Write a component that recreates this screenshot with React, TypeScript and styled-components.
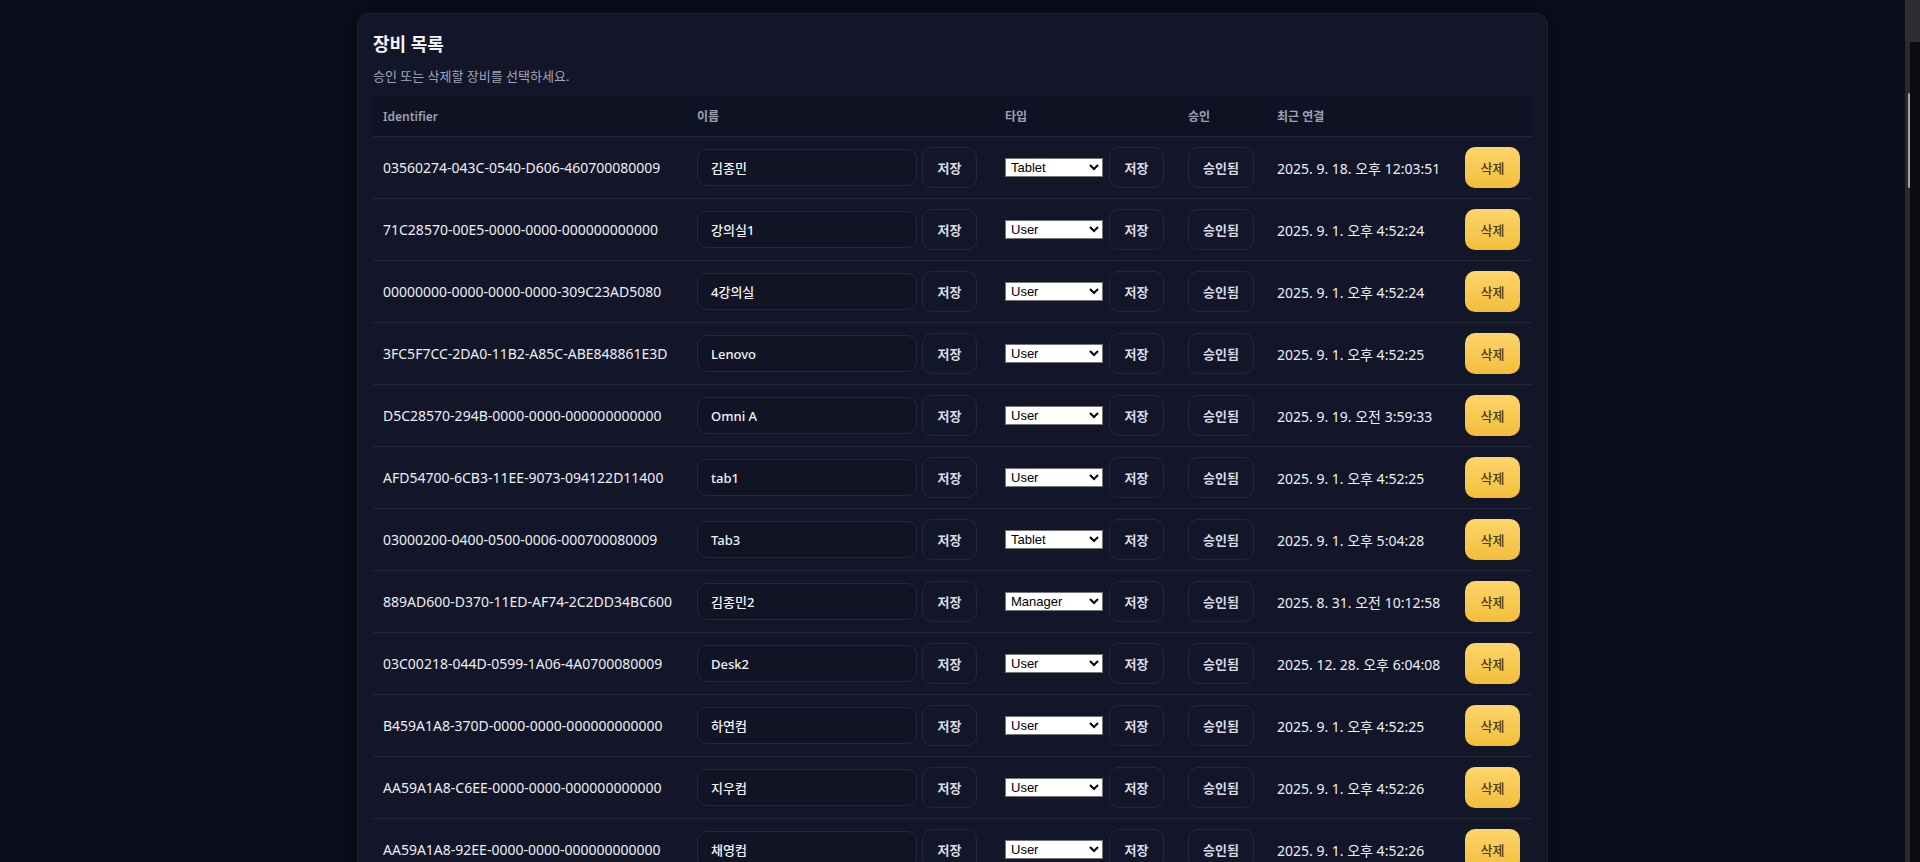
import styled, { createGlobalStyle } from "styled-components";

type DeviceType = {
  id: string;
  name: string;
  type: string;
  lastSeen: string;
};

const devices: DeviceType[] = [
  { id: "03560274-043C-0540-D606-460700080009", name: "김종민", type: "Tablet", lastSeen: "2025. 9. 18. 오후 12:03:51" },
  { id: "71C28570-00E5-0000-0000-000000000000", name: "강의실1", type: "User", lastSeen: "2025. 9. 1. 오후 4:52:24" },
  { id: "00000000-0000-0000-0000-309C23AD5080", name: "4강의실", type: "User", lastSeen: "2025. 9. 1. 오후 4:52:24" },
  { id: "3FC5F7CC-2DA0-11B2-A85C-ABE848861E3D", name: "Lenovo", type: "User", lastSeen: "2025. 9. 1. 오후 4:52:25" },
  { id: "D5C28570-294B-0000-0000-000000000000", name: "Omni A", type: "User", lastSeen: "2025. 9. 19. 오전 3:59:33" },
  { id: "AFD54700-6CB3-11EE-9073-094122D11400", name: "tab1", type: "User", lastSeen: "2025. 9. 1. 오후 4:52:25" },
  { id: "03000200-0400-0500-0006-000700080009", name: "Tab3", type: "Tablet", lastSeen: "2025. 9. 1. 오후 5:04:28" },
  { id: "889AD600-D370-11ED-AF74-2C2DD34BC600", name: "김종민2", type: "Manager", lastSeen: "2025. 8. 31. 오전 10:12:58" },
  { id: "03C00218-044D-0599-1A06-4A0700080009", name: "Desk2", type: "User", lastSeen: "2025. 12. 28. 오후 6:04:08" },
  { id: "B459A1A8-370D-0000-0000-000000000000", name: "하연컴", type: "User", lastSeen: "2025. 9. 1. 오후 4:52:25" },
  { id: "AA59A1A8-C6EE-0000-0000-000000000000", name: "지우컴", type: "User", lastSeen: "2025. 9. 1. 오후 4:52:26" },
  { id: "AA59A1A8-92EE-0000-0000-000000000000", name: "채영컴", type: "User", lastSeen: "2025. 9. 1. 오후 4:52:26" },
];

const types = ["Tablet", "User", "Manager"];

export default function App() {
  return (
    <>
      <GlobalStyle />
      <Shell>
        <Main>
          <Card>
            <Title>장비 목록</Title>
            <Sub>승인 또는 삭제할 장비를 선택하세요.</Sub>
            <Table>
              <colgroup>
                <col style={{ width: 314 }} />
                <col style={{ width: 308 }} />
                <col style={{ width: 183 }} />
                <col style={{ width: 89 }} />
                <col style={{ width: 188 }} />
                <col style={{ width: 77 }} />
              </colgroup>
              <thead>
                <tr>
                  <Th>Identifier</Th>
                  <Th>이름</Th>
                  <Th>타입</Th>
                  <Th>승인</Th>
                  <Th>최근 연결</Th>
                  <Th />
                </tr>
              </thead>
              <tbody>
                {devices.map((d) => (
                  <Row key={d.id}>
                    <Td>{d.id}</Td>
                    <Td>
                      <Inline>
                        <NameInput defaultValue={d.name} />
                        <GhostButton $w={55}>저장</GhostButton>
                      </Inline>
                    </Td>
                    <Td>
                      <Inline $gap={6}>
                        <TypeSelect defaultValue={d.type}>
                          {types.map((t) => (
                            <option key={t}>{t}</option>
                          ))}
                        </TypeSelect>
                        <GhostButton $w={55}>저장</GhostButton>
                      </Inline>
                    </Td>
                    <Td>
                      <GhostButton $w={66}>승인됨</GhostButton>
                    </Td>
                    <Td>{d.lastSeen}</Td>
                    <Td>
                      <DeleteButton>삭제</DeleteButton>
                    </Td>
                  </Row>
                ))}
              </tbody>
            </Table>
          </Card>
        </Main>
        <Rail>
          <RailCap />
          <RailThumb />
        </Rail>
      </Shell>
    </>
  );
}

const GlobalStyle = createGlobalStyle`
  html, body {
    margin: 0;
    background: #0b0e1b;
    overflow: hidden;
  }
  body {
    font-family: "Noto Sans", "Noto Sans CJK KR", sans-serif;
    color: #e6e8ef;
  }
`;

const Shell = styled.div`
  display: flex;
  height: 100vh;
  overflow: hidden;
`;

const Main = styled.main`
  flex: 1;
  padding: 13px 0;
  overflow: hidden;
`;

// page scrollbar, as it shows in the capture
const Rail = styled.div`
  width: 15px;
  flex-shrink: 0;
  display: flex;
  flex-direction: column;
  background: linear-gradient(to right, #2a2a2c 0 5px, #0b0b10 5px);
`;

const RailCap = styled.div`
  height: 42px;
  background: #2e2e30;
`;

const RailThumb = styled.div`
  width: 2px;
  height: 95px;
  margin: 51px 0 0 3px;
  border-radius: 1px;
  background: #a3a3a6;
`;

const Card = styled.div`
  width: 1191px;
  box-sizing: border-box;
  margin: 0 auto;
  padding: 17px 15px 16px;
  background: #131628;
  border: 1px solid #1f2336;
  border-radius: 12px;
  box-shadow: 0 0 24px rgba(0, 0, 0, 0.35);
`;

const Title = styled.h2`
  margin: 0;
  font-size: 18px;
  line-height: 26px;
  font-weight: 700;
  color: #f3f4f8;
`;

const Sub = styled.p`
  margin: 10px 0 11px;
  font-size: 13px;
  line-height: 19px;
  color: #a0a5b8;
`;

const Table = styled.table`
  width: 1159px;
  table-layout: fixed;
  border-collapse: collapse;
  font-size: 14px;
`;

const Th = styled.th`
  background: #0f1223;
  padding: 10px;
  text-align: left;
  font-size: 12px;
  line-height: 19px;
  font-weight: 600;
  color: #9ba1b6;
  border-bottom: 1px solid #232839;
`;

const Row = styled.tr`
  border-bottom: 1px solid #232839;
`;

const Td = styled.td`
  padding: 10px;
  height: 41px;
  color: #eceef4;
  white-space: nowrap;
  vertical-align: middle;
`;

const Inline = styled.div<{ $gap?: number }>`
  display: flex;
  align-items: center;
  gap: ${(p) => p.$gap ?? 5}px;
`;

const NameInput = styled.input`
  width: 220px;
  height: 37px;
  box-sizing: border-box;
  padding: 0 13px;
  background: #111425;
  border: 1px solid #242940;
  border-radius: 10px;
  color: #f1f2f6;
  font-family: inherit;
  font-size: 13px;
  font-weight: 500;
  outline: none;
`;

const GhostButton = styled.button<{ $w: number }>`
  width: ${(p) => p.$w}px;
  height: 41px;
  padding: 0;
  background: transparent;
  border: 1px solid #22273a;
  border-radius: 10px;
  color: #d9dce6;
  font-family: inherit;
  font-size: 13px;
  font-weight: 600;
  white-space: nowrap;
`;

const TypeSelect = styled.select`
  width: 98px;
  height: 19px;
  padding: 0 0 0 1px;
  background: #ffffff;
  color: #000000;
  border: 1px solid #767676;
  border-radius: 0;
  font-family: "Liberation Sans", Arial, sans-serif;
  font-size: 13px;
`;

const DeleteButton = styled.button`
  height: 41px;
  width: 55px;
  background: linear-gradient(#fdd56b, #f3be3b);
  border: none;
  border-radius: 10px;
  color: #4a3810;
  font-family: inherit;
  font-size: 13px;
  font-weight: 500;
`;
